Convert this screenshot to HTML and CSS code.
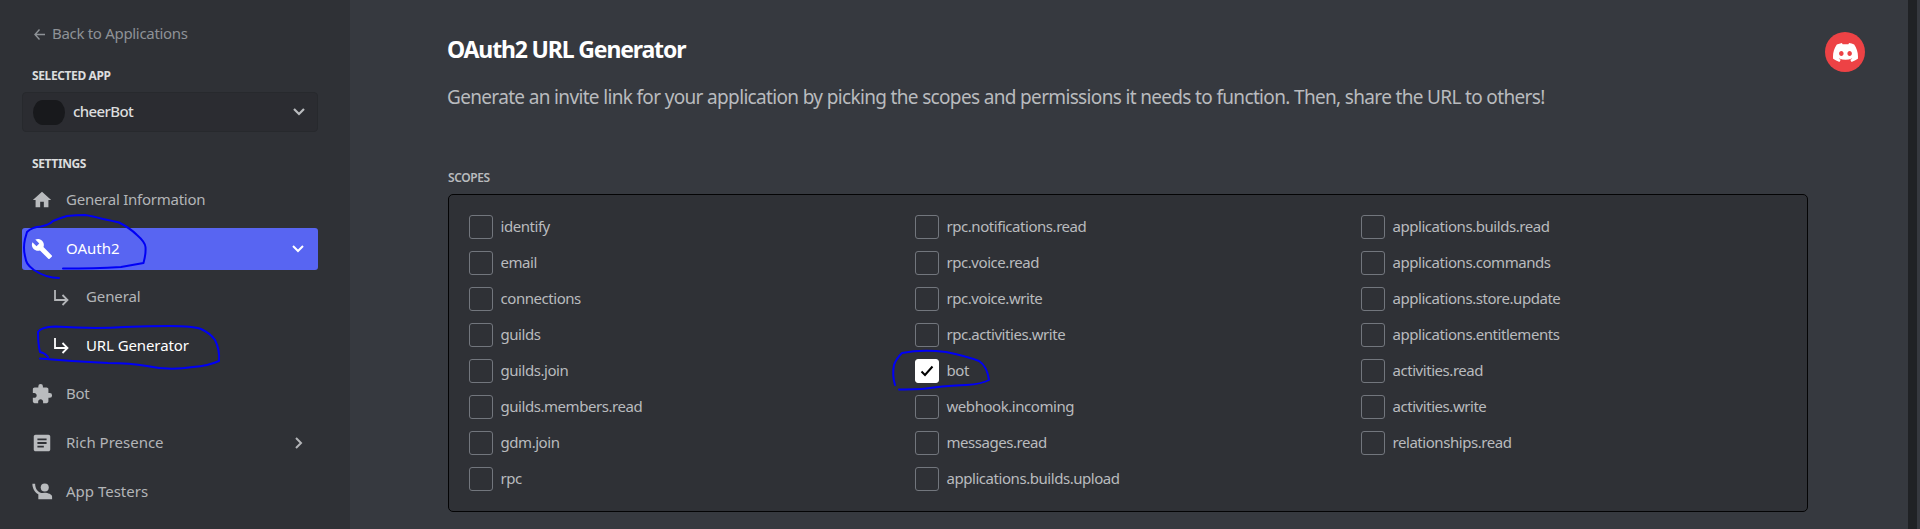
FILE: index.html
```html
<!DOCTYPE html>
<html lang="en">
<head>
<meta charset="utf-8">
<title>OAuth2 URL Generator</title>
<link rel="stylesheet" href="styles.css">
</head>
<body>
<div class="app">
  <aside class="sidebar">
    <a class="back"><svg class="back-icon" viewBox="0 0 11 11"><path d="M5.5 .5 1 5.5l4.500 5M1 5.500h10"/></svg><span>Back to Applications</span></a>
    <h2 class="side-heading">SELECTED APP</h2>
    <div class="select">
      <span class="avatar"></span><span class="select-name">cheerBot</span>
      <svg class="select-chevron" viewBox="0 0 12 8"><path d="M1 1l5 5 5-5"/></svg>
    </div>
    <h2 class="side-heading side-heading-settings">SETTINGS</h2>
    <nav class="nav">
      <a class="item"><svg class="icon" viewBox="0 0 24 24"><path d="M10 20v-6h4v6h5v-8h3L12 3 2 12h3v8z"/></svg><span>General Information</span></a>
      <a class="item active"><svg class="icon" viewBox="0 0 24 24"><path d="M22.700 19l-9.100-9.100c.9-2.300.4-5-1.500-6.900-2-2-5-2.400-7.400-1.300L9 6 6 9 1.600 4.700C.4 7.100.9 10.100 2.900 12.100c1.900 1.900 4.600 2.400 6.900 1.500l9.100 9.100c.4.4 1 .4 1.400 0l2.300-2.300c.5-.4.5-1.100.1-1.400z"/></svg><span>OAuth2</span><svg class="chevron" viewBox="0 0 12 8"><path d="M1 1l5 5 5-5"/></svg></a>
      <a class="item sub"><svg class="sub-icon" viewBox="0 0 16 17"><path d="M2 1v10h12M9.500 6l5 5-5 5"/></svg><span>General</span></a>
      <a class="item sub current"><svg class="sub-icon" viewBox="0 0 16 17"><path d="M2 1v10h12M9.500 6l5 5-5 5"/></svg><span>URL Generator</span></a>
      <a class="item"><svg class="icon" viewBox="0 0 24 24"><path d="M20.500 11H19V7c0-1.100-.9-2-2-2h-4V3.500a2.500 2.500 0 0 0-5 0V5H4c-1.100 0-1.990.9-1.990 2v3.800H3.500c1.490 0 2.700 1.210 2.700 2.700s-1.210 2.700-2.700 2.700H2V20c0 1.100.9 2 2 2h3.800v-1.500c0-1.490 1.210-2.700 2.700-2.700 1.490 0 2.700 1.210 2.700 2.700V22H17c1.100 0 2-.9 2-2v-4h1.500a2.500 2.500 0 0 0 0-5z"/></svg><span>Bot</span></a>
      <a class="item roomy"><svg class="icon" viewBox="0 0 24 24"><path d="M19 3H5c-1.100 0-2 .9-2 2v14c0 1.100.9 2 2 2h14c1.100 0 2-.9 2-2V5c0-1.100-.9-2-2-2zm-5 14H7v-2h7v2zm3-4H7v-2h10v2zm0-4H7V7h10v2z"/></svg><span>Rich Presence</span><svg class="chevron right" viewBox="0 0 8 12"><path d="M1 1l5 5-5 5"/></svg></a>
      <a class="item roomy"><svg class="icon" viewBox="0 0 24 24"><circle cx="15" cy="7" r="4.400"/><path d="M1.500 3h3c0 5 2.600 8.800 6.700 10.200 1.100-.3 2.300-.5 3.500-.5 4 0 8.300 1.800 8.300 4.300v3H8v-5.500C4 12.500 1.500 8 1.500 3z"/></svg><span>App Testers</span></a>
    </nav>
  </aside>
  <main class="content">
    <div class="column">
      <h1 class="title">OAuth2 URL Generator</h1>
      <p class="intro">Generate an invite link for your application by picking the scopes and permissions it needs to function. Then, share the URL to others!</p>
      <h3 class="scopes-heading">SCOPES</h3>
      <div class="scopes">
        <label class="scope"><i class="box"></i><span>identify</span></label>
        <label class="scope"><i class="box"></i><span>email</span></label>
        <label class="scope"><i class="box"></i><span>connections</span></label>
        <label class="scope"><i class="box"></i><span>guilds</span></label>
        <label class="scope"><i class="box"></i><span>guilds.join</span></label>
        <label class="scope"><i class="box"></i><span>guilds.members.read</span></label>
        <label class="scope"><i class="box"></i><span>gdm.join</span></label>
        <label class="scope"><i class="box"></i><span>rpc</span></label>
        <label class="scope"><i class="box"></i><span>rpc.notifications.read</span></label>
        <label class="scope"><i class="box"></i><span>rpc.voice.read</span></label>
        <label class="scope"><i class="box"></i><span>rpc.voice.write</span></label>
        <label class="scope"><i class="box"></i><span>rpc.activities.write</span></label>
        <label class="scope"><i class="box checked"><svg class="tick" viewBox="0 0 14 12"><path d="M1.500 6.500l3.500 3.500 7.500-8.500"/></svg></i><span>bot</span></label>
        <label class="scope"><i class="box"></i><span>webhook.incoming</span></label>
        <label class="scope"><i class="box"></i><span>messages.read</span></label>
        <label class="scope"><i class="box"></i><span>applications.builds.upload</span></label>
        <label class="scope"><i class="box"></i><span>applications.builds.read</span></label>
        <label class="scope"><i class="box"></i><span>applications.commands</span></label>
        <label class="scope"><i class="box"></i><span>applications.store.update</span></label>
        <label class="scope"><i class="box"></i><span>applications.entitlements</span></label>
        <label class="scope"><i class="box"></i><span>activities.read</span></label>
        <label class="scope"><i class="box"></i><span>activities.write</span></label>
        <label class="scope"><i class="box"></i><span>relationships.read</span></label>
      </div>
    </div>
    <div class="user"><svg class="logo" viewBox="0 0 127.140 96.360"><path d="M107.700 8.070A105.150 105.150 0 0 0 81.470 0a72.060 72.060 0 0 0-3.360 6.830 97.680 97.680 0 0 0-29.110 0A72.370 72.370 0 0 0 45.640 0 105.890 105.890 0 0 0 19.390 8.090C2.790 32.650-1.710 56.600.54 80.210a105.730 105.730 0 0 0 32.170 16.150 77.700 77.700 0 0 0 6.890-11.110 68.420 68.420 0 0 1-10.850-5.180c.91-.66 1.800-1.340 2.660-2a75.570 75.570 0 0 0 64.320 0c.87.710 1.760 1.390 2.660 2a68.680 68.680 0 0 1-10.870 5.190 77 77 0 0 0 6.890 11.100 105.250 105.250 0 0 0 32.190-16.140c2.640-27.380-4.510-51.110-18.900-72.150zM42.450 65.690C36.180 65.690 31 60 31 53s5-12.740 11.430-12.740S54 46 53.890 53s-5.050 12.690-11.440 12.690zm42.240 0C78.410 65.690 73.250 60 73.250 53s5-12.740 11.440-12.740S96.230 46 96.120 53s-5.040 12.690-11.430 12.690z"/></svg></div>
  </main>
  <div class="scrollbar"></div>
</div>
<svg class="ink" viewBox="0 0 1920 529">
  <path d="M59 278C50 278 43 276 34 270C27 265 26 262 25 256Q23 248 25 239L27 232Q32 227 41 226.500Q49 225 53 221Q60 218 67 216Q77 215 85 215Q92 216 103 219Q113 221 119 222.500Q130 228 137 235Q145 242 145.500 247Q146 254 143.500 263Q132 265 121 267Q94 268.500 63 268.500"/>
  <path d="M48 357Q45 353 40 352Q38 344 38 332Q41 327 55 326.500Q95 329 124 327Q148 326 170 326Q193 326 201 329Q210 333 215 340Q220 350 219 361Q208 366 193 367Q169 371 147 366Q130 363 108 363Q70 361 40 358.500"/>
  <path d="M895 385Q892 375 894 365Q896 359 902 353Q922 349 946 352Q966 356 979 361Q987 366 989 380Q982 384 966 385Q945 386 938 387Q920 390 899 389.500"/>
</svg>
</body>
</html>
```
FILE: styles.css
```css
* { box-sizing: border-box; }
body { margin: 0; font-family: "Noto Sans", sans-serif; color: #b9bbbe; background: #36393f; overflow: hidden; }
h1, h2, h3, p { margin: 0; }
svg { display: block; fill: none; stroke: none; flex: none; }
.app { display: flex; width: 1920px; height: 529px; }

.sidebar { width: 350px; flex: none; background: #2f3136; padding: 24px 32px 0 22px; }
.back { display: flex; align-items: center; gap: 7px; height: 20px; margin-left: 12px; font-size: 15px; letter-spacing: -0.31px; color: #8e9297; }
.back span, .item span, .scope span { padding-bottom: 2px; }
.back-icon { width: 11px; height: 11px; stroke: currentColor; stroke-width: 1.4; }
.side-heading { height: 16px; margin: 24px 0 8px 10px; font-size: 12px; line-height: 16px; font-weight: 700; letter-spacing: -0.38px; color: #dcddde; }
.select { display: flex; align-items: center; height: 40px; padding: 0 12px 0 10px; border: 1px solid #27292d; border-radius: 4px; background: #2b2c31; }
.avatar { width: 32px; height: 25px; border-radius: 10px / 13px; background: #18191c; }
.select-name { flex: 1; margin-left: 8px; padding-bottom: 2px; font-size: 15px; font-weight: 500; letter-spacing: -0.6px; color: #dcddde; }
.select-chevron { width: 12px; height: 8px; stroke: #b9bbbe; stroke-width: 2.2; }
.side-heading-settings { margin: 24px 0 7px 10px; }
.nav { display: flex; flex-direction: column; gap: 6.600px; }
.item { display: flex; align-items: center; height: 42px; padding: 0 14px 0 9px; border-radius: 3px; font-size: 15px; letter-spacing: -0.25px; color: #b3b5b8; }
.icon { width: 22px; height: 22px; margin-right: 13px; fill: #b9bbbe; }
.active { background: #5865f2; color: #fff; }
.active .icon { fill: #fff; }
.active span { letter-spacing: 0; }
.roomy { letter-spacing: 0; }
.chevron { width: 12px; height: 8px; margin-left: auto; stroke: currentColor; stroke-width: 2; }
.right { width: 8px; height: 12px; margin-right: 1px; }
.sub { padding-left: 31px; letter-spacing: -0.1px; }
.sub-icon { width: 16px; height: 17px; margin-right: 17px; stroke: currentColor; stroke-width: 1.8; }
.current { color: #fff; }

.content { display: flex; flex: 1; justify-content: space-between; padding: 32px 43px 0 98px; }
.column { width: 1361px; margin-left: -1px; }
.title { height: 36px; font-size: 23px; line-height: 34px; font-weight: 700; letter-spacing: -1.15px; color: #fff; }
.intro { margin-top: 15px; height: 28px; font-size: 19px; line-height: 28px; letter-spacing: -0.66px; white-space: nowrap; }
.scopes-heading { height: 16px; margin: 59px 0 8px 1px; font-size: 12px; line-height: 16px; font-weight: 600; letter-spacing: -0.4px; }
.scopes { display: grid; grid-auto-flow: column; grid-template-rows: repeat(8, 24px); grid-template-columns: repeat(3, 446px); row-gap: 12px; height: 318px; margin-left: 1px; padding: 20px; border: 1px solid #040405; border-radius: 5px; background: #2f3136; }
.scope { display: flex; align-items: center; gap: 7.500px; font-size: 15px; letter-spacing: -0.45px; white-space: nowrap; }
.box { display: flex; align-items: center; justify-content: center; width: 24px; height: 24px; border: 1px solid #72767d; border-radius: 3px; }
.checked { background: #fff; border-color: #fff; }
.tick { width: 14px; height: 12px; stroke: #000; stroke-width: 2; }
.user { display: flex; align-items: center; justify-content: center; width: 40px; height: 40px; border-radius: 50%; background: #ed4245; }
.logo { width: 25px; height: 19px; fill: #fff; }
.scrollbar { width: 9px; margin-right: 3px; flex: none; background: #202225; }
.ink { position: absolute; left: 0; top: 0; width: 1920px; height: 529px; stroke: #0000f5; stroke-width: 2; stroke-linecap: round; stroke-linejoin: round; pointer-events: none; }
```
